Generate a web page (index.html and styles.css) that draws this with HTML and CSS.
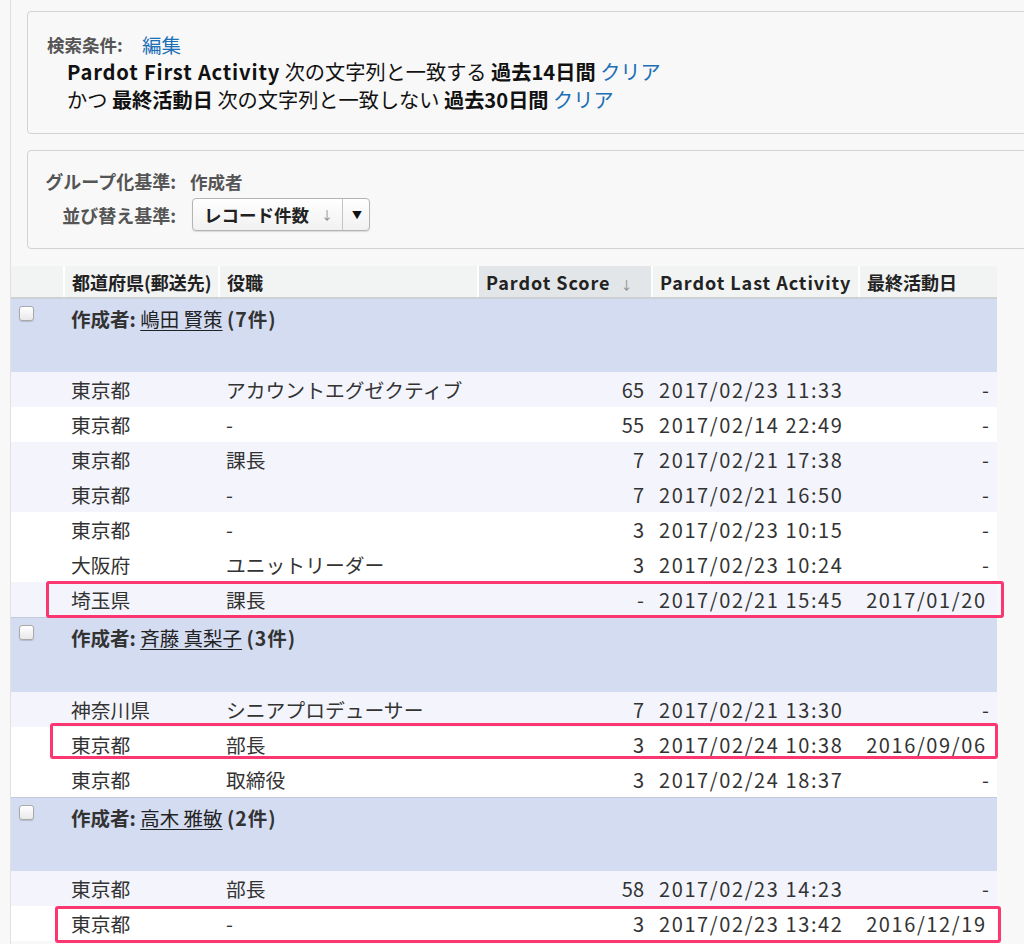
FILE: index.html
```html
<!DOCTYPE html>
<html lang="ja">
<head>
<meta charset="utf-8">
<title>レポート</title>
<link rel="stylesheet" href="styles.css">
</head>
<body>
<div class="page">
  <section class="panel filters">
    <div class="filter-head"><span class="label">検索条件:</span><a class="link edit">編集</a></div>
    <div class="filter-line"><b class="lat">Pardot First Activity</b> 次の文字列と一致する <b>過去14日間</b> <a class="link">クリア</a></div>
    <div class="filter-line">かつ <b>最終活動日</b> 次の文字列と一致しない <b>過去30日間</b> <a class="link">クリア</a></div>
  </section>

  <section class="panel grouping">
    <div class="g-label">グループ化基準:</div>
    <div class="g-value">作成者</div>
    <div class="g-label">並び替え基準:</div>
    <div class="g-value">
      <div class="split">
        <span class="split-main">レコード件数<span class="split-dir">↓</span></span>
        <span class="split-arrow">▼</span>
      </div>
    </div>
  </section>

  <table class="report">
    <colgroup>
      <col class="c-chk"><col class="c-pref"><col class="c-title"><col class="c-score"><col class="c-last"><col class="c-date">
    </colgroup>
    <thead>
      <tr>
        <th></th>
        <th>都道府県(郵送先)</th>
        <th>役職</th>
        <th class="sorted"><span class="lat">Pardot Score</span> <span class="dir">↓</span></th>
        <th><span class="lat">Pardot Last Activity</span></th>
        <th>最終活動日</th>
      </tr>
    </thead>
    <tbody>
      <tr class="group">
        <td><span class="chk"></span></td>
        <td colspan="5"><b>作成者:</b> <u>嶋田 賢策</u> <b class="cnt">(7件)</b></td>
      </tr>
      <tr class="lt"><td></td><td>東京都</td><td>アカウントエグゼクティブ</td><td class="num">65</td><td><span class="dt">2017/02/23 11:33</span></td><td class="num">-</td></tr>
      <tr><td></td><td>東京都</td><td>-</td><td class="num">55</td><td><span class="dt">2017/02/14 22:49</span></td><td class="num">-</td></tr>
      <tr class="lt"><td></td><td>東京都</td><td>課長</td><td class="num">7</td><td><span class="dt">2017/02/21 17:38</span></td><td class="num">-</td></tr>
      <tr class="lt"><td></td><td>東京都</td><td>-</td><td class="num">7</td><td><span class="dt">2017/02/21 16:50</span></td><td class="num">-</td></tr>
      <tr><td></td><td>東京都</td><td>-</td><td class="num">3</td><td><span class="dt">2017/02/23 10:15</span></td><td class="num">-</td></tr>
      <tr><td></td><td>大阪府</td><td>ユニットリーダー</td><td class="num">3</td><td><span class="dt">2017/02/23 10:24</span></td><td class="num">-</td></tr>
      <tr class="lt"><td class="anchor"><span class="mark mark-1"></span></td><td>埼玉県</td><td>課長</td><td class="num">-</td><td><span class="dt">2017/02/21 15:45</span></td><td class="num"><span class="dt">2017/01/20</span></td></tr>

      <tr class="group">
        <td><span class="chk"></span></td>
        <td colspan="5"><b>作成者:</b> <u>斉藤 真梨子</u> <b class="cnt">(3件)</b></td>
      </tr>
      <tr class="lt"><td></td><td>神奈川県</td><td>シニアプロデューサー</td><td class="num">7</td><td><span class="dt">2017/02/21 13:30</span></td><td class="num">-</td></tr>
      <tr><td class="anchor"><span class="mark mark-2"></span></td><td>東京都</td><td>部長</td><td class="num">3</td><td><span class="dt">2017/02/24 10:38</span></td><td class="num"><span class="dt">2016/09/06</span></td></tr>
      <tr><td></td><td>東京都</td><td>取締役</td><td class="num">3</td><td><span class="dt">2017/02/24 18:37</span></td><td class="num">-</td></tr>

      <tr class="group">
        <td><span class="chk"></span></td>
        <td colspan="5"><b>作成者:</b> <u>高木 雅敏</u> <b class="cnt">(2件)</b></td>
      </tr>
      <tr class="lt"><td></td><td>東京都</td><td>部長</td><td class="num">58</td><td><span class="dt">2017/02/23 14:23</span></td><td class="num">-</td></tr>
      <tr><td class="anchor"><span class="mark mark-3"></span></td><td>東京都</td><td>-</td><td class="num">3</td><td><span class="dt">2017/02/23 13:42</span></td><td class="num"><span class="dt">2016/12/19</span></td></tr>
    </tbody>
  </table>
</div>
</body>
</html>
```

FILE: styles.css
```css
html, body {
  margin: 0;
  padding: 0;
  background: #f8f8f8;
  overflow: hidden;
}

body {
  font-family: "Noto Sans CJK JP", "Liberation Sans", sans-serif;
  color: #333;
}

.page {
  margin-left: 10px;
  border-left: 1px solid #e0e0e0;
  padding-top: 11px;
  width: 1200px;
  min-height: 944px;
  background: #f8f8f8;
}

.panel {
  margin-left: 16px;
  border: 1px solid #d2d2d2;
  border-radius: 4px;
  background: #f8f8f8;
}

.filters {
  padding: 18px 0 0 19px;
  box-sizing: border-box;
  height: 123px;
}

.filter-head {
  display: flex;
  align-items: center;
  height: 28px;
}

.label {
  font-size: 17.5px;
  font-weight: 700;
  color: #555;
  width: 95px;
}

.link {
  color: #1b6fb7;
}

.edit {
  font-size: 19.5px;
}

.filter-line {
  font-size: 20.2px;
  line-height: 28px;
  color: #111;
  padding-left: 20px;
  white-space: nowrap;
}

.filter-line b {
  font-weight: 700;
}

.lat {
  letter-spacing: 0.8px;
}

.grouping {
  margin-top: 16px;
  height: 99px;
  box-sizing: border-box;
  padding: 16px 0 0 0;
  display: grid;
  grid-template-columns: 148px auto;
  grid-template-rows: 28px 34px;
  column-gap: 14px;
  align-items: center;
  justify-content: start;
}

.g-label {
  font-size: 18px;
  font-weight: 700;
  color: #555;
  text-align: right;
}

.g-value {
  font-size: 17.5px;
  font-weight: 700;
  color: #555;
}

.grouping .g-label:nth-of-type(3),
.grouping .g-value:last-child {
  margin-top: 5px;
}

.split {
  display: inline-flex;
  height: 33px;
  box-sizing: border-box;
  border: 1px solid #b4b4b4;
  border-radius: 4px;
  background: linear-gradient(#ffffff, #f1f1f1);
  box-shadow: 0 1px 1px rgba(0, 0, 0, 0.12);
  margin-left: 2px;
}

.split-main {
  display: flex;
  align-items: center;
  width: 150px;
  box-sizing: border-box;
  padding-left: 11px;
  font-size: 17.5px;
  font-weight: 700;
  color: #222;
  border-right: 1px solid #c4c4c4;
}

.split-dir {
  font-size: 12px;
  color: #888;
  margin-left: 12px;
  font-weight: 400;
}

.split-arrow {
  width: 26px;
  display: flex;
  align-items: center;
  justify-content: center;
  font-size: 10px;
  color: #111;
  padding-left: 2px;
  box-sizing: border-box;
}

.report {
  margin-top: 17px;
  width: 986px;
  table-layout: fixed;
  border-collapse: collapse;
  border-spacing: 0;
  font-size: 19.8px;
  color: #333;
}

.c-chk { width: 53px; }
.c-pref { width: 155px; }
.c-title { width: 259px; }
.c-score { width: 174px; }
.c-last { width: 207px; }
.c-date { width: 138px; }

.report th {
  height: 31px;
  padding: 0 7px;
  text-align: left;
  font-size: 18px;
  font-weight: 700;
  color: #222;
  background: #f2f3f3;
  border-left: 2px solid #ffffff;
  border-bottom: 2px solid #cdd1d5;
  white-space: nowrap;
  vertical-align: middle;
}

.report th .lat {
  letter-spacing: 0.95px;
}

.report th:first-child {
  border-left: 0;
}

.report th.sorted {
  background: #e3e6e8;
}

.report th .dir {
  font-size: 12px;
  color: #888;
  font-weight: 400;
  margin-left: 6px;
}

.report td {
  height: 35px;
  padding: 0 7px;
  white-space: nowrap;
  background: #ffffff;
  vertical-align: middle;
}

.report tr.lt td {
  background: #f4f5fc;
}

.report td.num {
  text-align: right;
  padding-right: 8px;
  font-size: 20px;
}

.dt {
  font-size: 20px;
  letter-spacing: 1.6px;
}

.report td.num .dt {
  margin-right: 2.4px;
}

.report tr.group td {
  height: 74px;
  box-sizing: border-box;
  background: #d4dcf2;
  border-top: 1px solid #c3cade;
  vertical-align: top;
  padding-top: 5px;
  font-size: 19.5px;
  color: #333;
}

.report tr.group td:first-child {
  padding: 7px 0 0 8px;
}

.report tr.group b {
  font-weight: 700;
}

.report tr.group .cnt {
  letter-spacing: 1px;
}

.report tr.group u {
  color: #222;
  text-underline-offset: 3px;
}

.chk {
  display: block;
  width: 15px;
  height: 15px;
  box-sizing: border-box;
  border: 1px solid #a9a9a9;
  border-radius: 3px;
  background: linear-gradient(#ffffff, #e9e9e9);
  box-shadow: 0 1px 1px rgba(0, 0, 0, 0.15);
}

.report td.anchor {
  position: relative;
}

.mark {
  position: absolute;
  box-sizing: border-box;
  border: 3px solid #fb3670;
  border-radius: 3px;
  pointer-events: none;
}

.mark-1 {
  left: 35px;
  top: -1px;
  width: 958px;
  height: 37px;
}

.mark-2 {
  left: 39px;
  top: -4px;
  width: 948px;
  height: 36px;
}

.mark-3 {
  left: 44px;
  top: 0px;
  width: 946px;
  height: 37px;
}
```
